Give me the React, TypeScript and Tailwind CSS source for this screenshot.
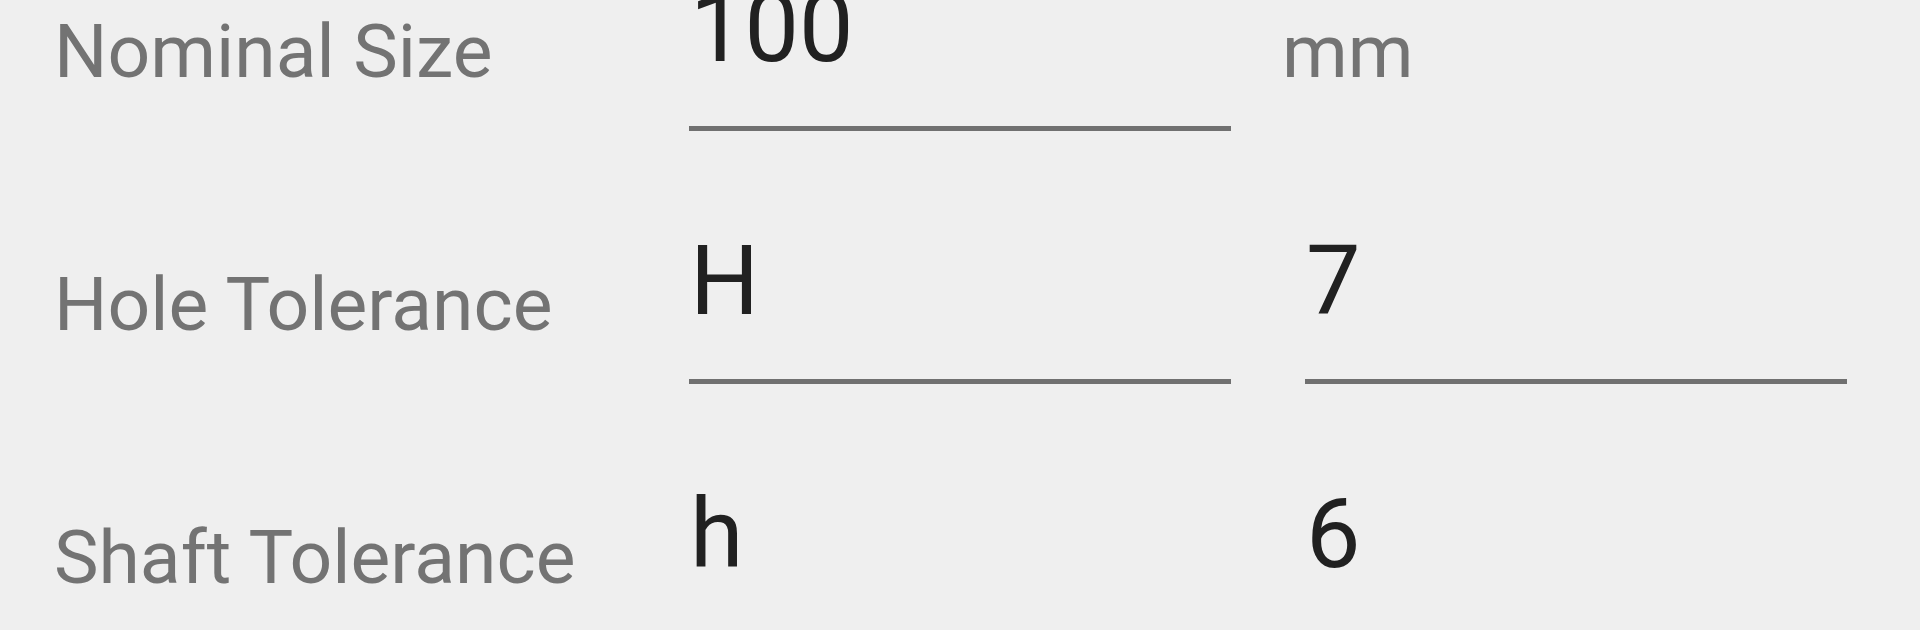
const font = { fontFamily: 'Roboto, "Noto Sans", sans-serif' };

function Field({ value, className = '' }: { value: string; className?: string }) {
  return (
    <div className={`w-[542px] shrink-0 ${className}`}>
      <div className="h-[97px] pl-[1px] text-[97px] leading-none text-[#212121]">{value}</div>
      <div className="mt-[49px] h-[5px] bg-[#707070]" />
    </div>
  );
}

function Row({ label, children }: { label: string; children: React.ReactNode }) {
  return (
    <div className="flex h-[253px] items-start">
      <div className="mt-[34px] w-[689px] shrink-0 pl-[54px] text-[75px] leading-none text-[#737373]">
        {label}
      </div>
      {children}
    </div>
  );
}

export default function App() {
  return (
    <div className="h-[630px] w-full overflow-hidden bg-[#efefef]" style={font}>
      <div className="-mt-[20px] flex flex-col">
        <Row label="Nominal Size">
          <Field value="100" />
          <div className="ml-[51px] mt-[34px] text-[75px] leading-none text-[#737373]">mm</div>
        </Row>
        <Row label="Hole Tolerance">
          <Field value="H" />
          <Field value="7" className="ml-[74px]" />
        </Row>
        <Row label="Shaft Tolerance">
          <Field value="h" />
          <Field value="6" className="ml-[74px]" />
        </Row>
      </div>
    </div>
  );
}
